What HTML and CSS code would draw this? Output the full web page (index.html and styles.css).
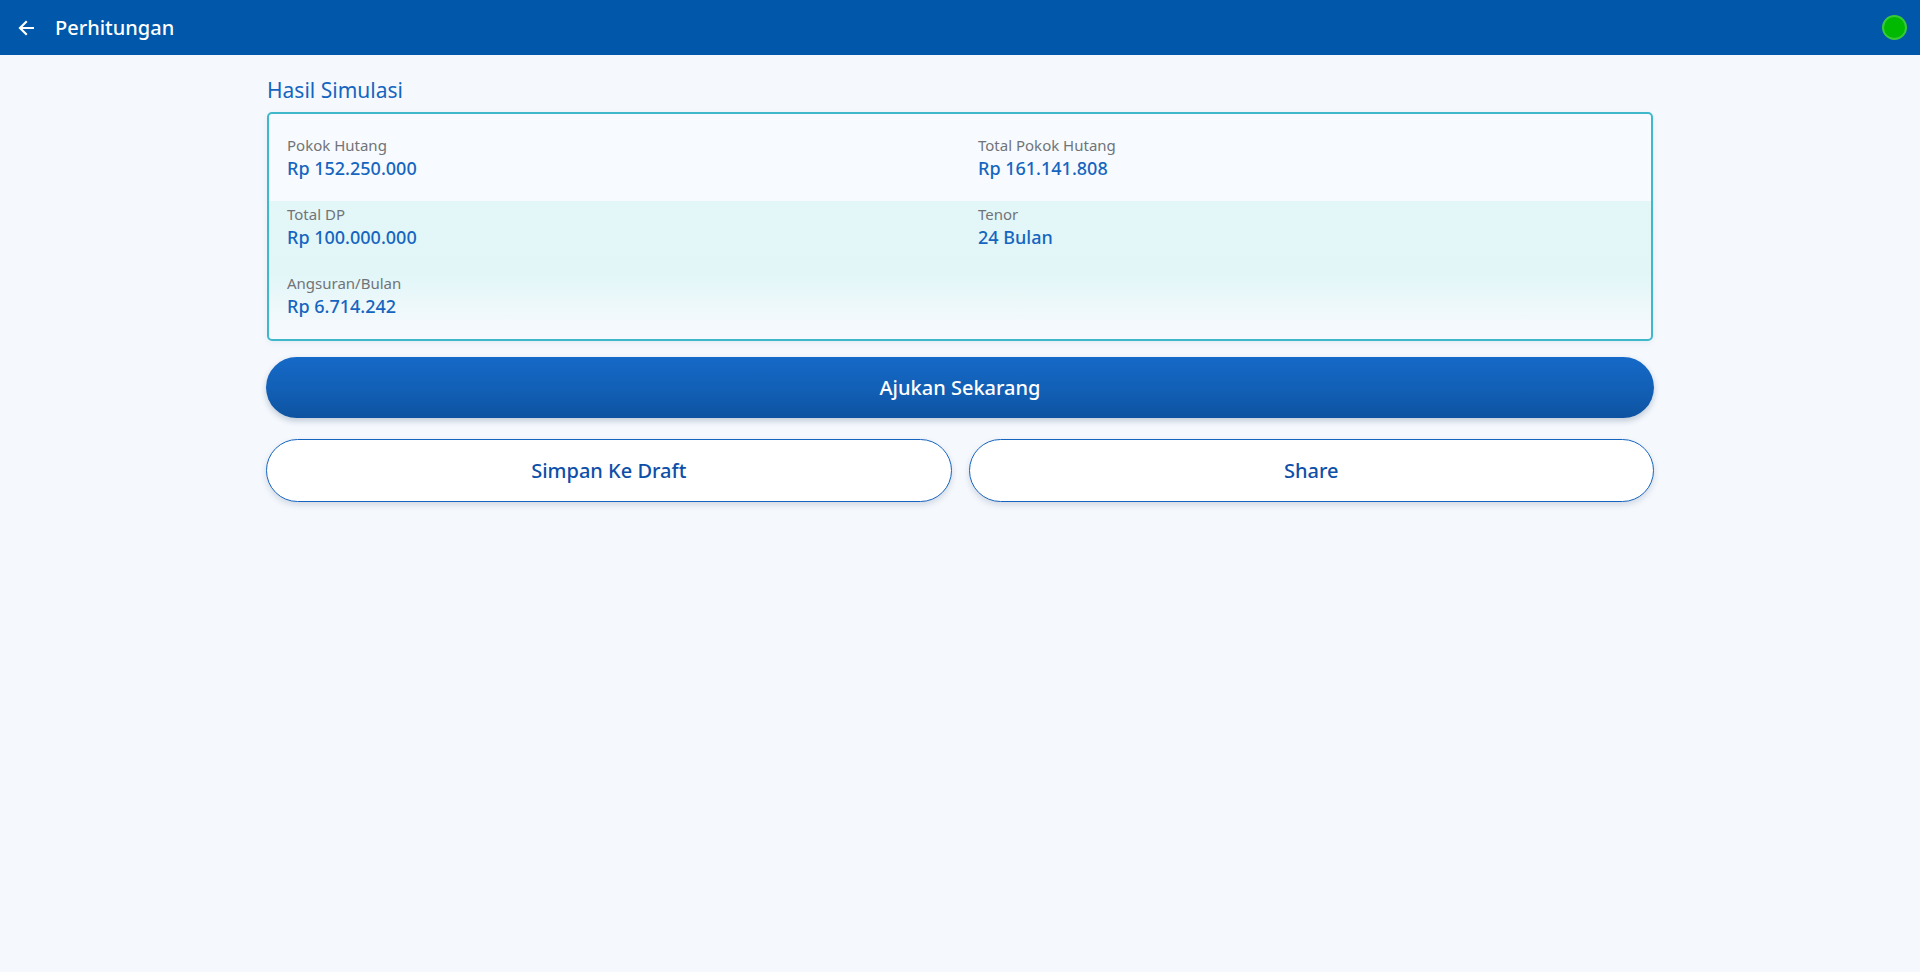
FILE: index.html
```html
<!DOCTYPE html>
<html lang="id">
<head>
<meta charset="utf-8">
<title>Perhitungan</title>
<link rel="stylesheet" href="styles.css">
</head>
<body>
<header class="topbar">
  <div class="topbar-left">
    <svg class="back-icon" width="16" height="16" viewBox="0 0 16 16" aria-hidden="true">
      <path d="M15 8H2.5M8 2L2 8l6 6" fill="none" stroke="#fff" stroke-width="2.2" stroke-linecap="square"/>
    </svg>
    <span class="topbar-title">Perhitungan</span>
  </div>
  <span class="status-dot"></span>
</header>
<main class="content">
  <h2 class="section-title">Hasil Simulasi</h2>
  <div class="result-card">
    <div class="result-grid">
      <div class="cell"><div class="label">Pokok Hutang</div><div class="value">Rp 152.250.000</div></div>
      <div class="cell"><div class="label">Total Pokok Hutang</div><div class="value">Rp 161.141.808</div></div>
      <div class="cell"><div class="label">Total DP</div><div class="value">Rp 100.000.000</div></div>
      <div class="cell"><div class="label">Tenor</div><div class="value">24 Bulan</div></div>
      <div class="cell"><div class="label">Angsuran/Bulan</div><div class="value">Rp 6.714.242</div></div>
    </div>
  </div>
  <button class="btn btn-primary">Ajukan Sekarang</button>
  <div class="btn-row">
    <button class="btn btn-outline">Simpan Ke Draft</button>
    <button class="btn btn-outline">Share</button>
  </div>
</main>
</body>
</html>
```
FILE: styles.css
```css
* { box-sizing: border-box; }
html, body { margin: 0; padding: 0; }
body {
  background: #f5f9fe;
  font-family: "Noto Sans", "Open Sans", sans-serif;
  min-height: 972px;
}
.topbar {
  height: 55px;
  background: #0158aa;
  display: flex;
  align-items: center;
  justify-content: space-between;
  padding: 0 13px 0 18px;
}
.topbar-left { display: flex; align-items: center; }
.back-icon { display: block; margin-right: 21px; margin-top: 1px; }
.topbar-title {
  color: #fff;
  font-size: 20px;
  font-weight: 500;
  line-height: 27px;
}
.status-dot {
  width: 25px;
  height: 25px;
  border-radius: 50%;
  background: #00b900;
  border: 2px solid #38c938;
}
.content {
  width: 1388px;
  margin: 0 auto;
  padding-top: 22px;
}
.section-title {
  margin: 0 0 8px 1px;
  font-size: 21px;
  line-height: 27px;
  font-weight: 400;
  color: #1565c0;
}
.result-card {
  margin: 0 1px;
  border: 2px solid #3fb8cc;
  border-radius: 5px;
  box-shadow: 0 2px 6px rgba(0, 40, 80, 0.06);
  background: linear-gradient(to bottom,
    #f7fbff 0%, #f7fbff 38.8%,
    #e3f7f8 38.8%, #e2f6f8 72%,
    #f3f9fc 92%, #f6faff 100%);
  padding: 21px 0 19px;
}
.result-grid {
  display: grid;
  grid-template-columns: 1fr 1fr;
  row-gap: 22px;
}
.cell { padding-left: 18px; }
.label {
  font-size: 15px;
  line-height: 20px;
  color: #707478;
}
.value {
  font-size: 18px;
  line-height: 27px;
  font-weight: 500;
  color: #1565c0;
}
.btn {
  display: flex;
  align-items: center;
  justify-content: center;
  font-family: inherit;
  font-size: 20px;
  border-radius: 32px;
  cursor: pointer;
}
.btn-primary {
  width: 100%;
  height: 61px;
  margin-top: 16px;
  border: none;
  color: #fff;
  font-weight: 500;
  background: linear-gradient(to bottom, #1569c7 0%, #1260b7 50%, #0d53a1 100%);
  box-shadow: 0 3px 6px rgba(0, 30, 70, 0.22);
}
.btn-row {
  display: grid;
  grid-template-columns: 1fr 1fr;
  column-gap: 17px;
  margin-top: 21px;
}
.btn-outline {
  height: 63px;
  background: #fff;
  border: 1px solid #1565c0;
  color: #0d4fa8;
  font-weight: 500;
  box-shadow: 0 3px 6px rgba(0, 30, 70, 0.15);
}
```
